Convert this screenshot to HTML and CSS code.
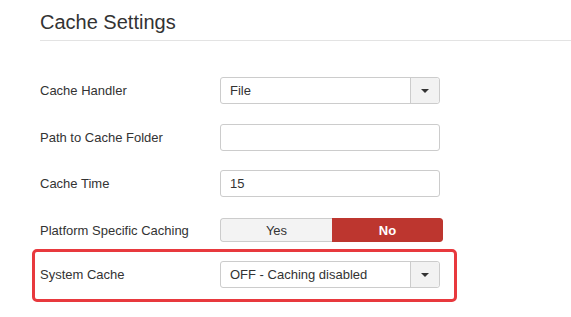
FILE: index.html
```html
<!DOCTYPE html>
<html>
<head>
<meta charset="utf-8">
<link rel="stylesheet" href="styles.css">
</head>
<body>
<div class="page">
  <h2 class="title">Cache Settings</h2>
  <div class="form">
    <div class="row">
      <label class="label">Cache Handler</label>
      <div class="select"><span class="select-value">File</span><span class="select-btn"><span class="caret"></span></span></div>
    </div>
    <div class="row">
      <label class="label">Path to Cache Folder</label>
      <div class="input"></div>
    </div>
    <div class="row">
      <label class="label">Cache Time</label>
      <div class="input"><span class="select-value">15</span></div>
    </div>
    <div class="row">
      <label class="label">Platform Specific Caching</label>
      <div class="toggle"><span class="tg yes">Yes</span><span class="tg no">No</span></div>
    </div>
    <div class="highlight">
      <div class="row">
        <label class="label">System Cache</label>
        <div class="select"><span class="select-value">OFF - Caching disabled</span><span class="select-btn"><span class="caret"></span></span></div>
      </div>
    </div>
  </div>
</div>
</body>
</html>
```
FILE: styles.css
```css
html, body {
  margin: 0;
  padding: 0;
  background: #fff;
}
body {
  font-family: "Liberation Sans", Arial, sans-serif;
  color: #333;
  font-size: 13px;
}
.page {
  padding-left: 40px;
}
.title {
  margin: 0;
  padding-top: 11px;
  height: 29px;
  line-height: 22px;
  font-size: 20px;
  font-weight: normal;
  color: #333;
  border-bottom: 1px solid #e3e3e3;
}
.form {
  padding-top: 36px;
}
.row {
  display: flex;
  align-items: center;
  height: 27px;
  margin-bottom: 19.5px;
}
.label {
  width: 180px;
  flex: none;
}
.select, .input {
  box-sizing: border-box;
  width: 220px;
  height: 27px;
  border: 1px solid #ccc;
  border-radius: 3px;
  display: flex;
  align-items: center;
  background: #fff;
}
.select-value {
  flex: 1;
  padding-left: 9px;
  font-size: 13px;
  color: #333;
}
.select-btn {
  width: 28px;
  align-self: stretch;
  border-left: 1px solid #ccc;
  background: #f2f2f2;
  border-radius: 0 3px 3px 0;
  display: flex;
  align-items: center;
  justify-content: center;
}
.caret {
  width: 0;
  height: 0;
  border-left: 4px solid transparent;
  border-right: 4px solid transparent;
  border-top: 4px solid #333;
}
.toggle {
  display: flex;
  width: 223px;
  height: 24px;
  box-sizing: border-box;
  border-radius: 3px;
  overflow: hidden;
}
.tg {
  display: flex;
  align-items: center;
  justify-content: center;
  font-size: 13px;
}
.yes {
  width: 111px;
  background: #f3f3f3;
  border: 1px solid #ccc;
  border-right: none;
  border-radius: 3px 0 0 3px;
  color: #333;
}
.no {
  flex: 1;
  background: #bd362f;
  color: #fff;
  font-weight: bold;
  border-radius: 0 3px 3px 0;
}
.highlight {
  margin-left: -8px;
  width: 425px;
  box-sizing: border-box;
  border: 3px solid #e8393e;
  border-radius: 5px;
  padding: 9px 0 11px 5px;
  margin-top: -14px;
}
.highlight .row {
  margin-bottom: 0;
}
```
